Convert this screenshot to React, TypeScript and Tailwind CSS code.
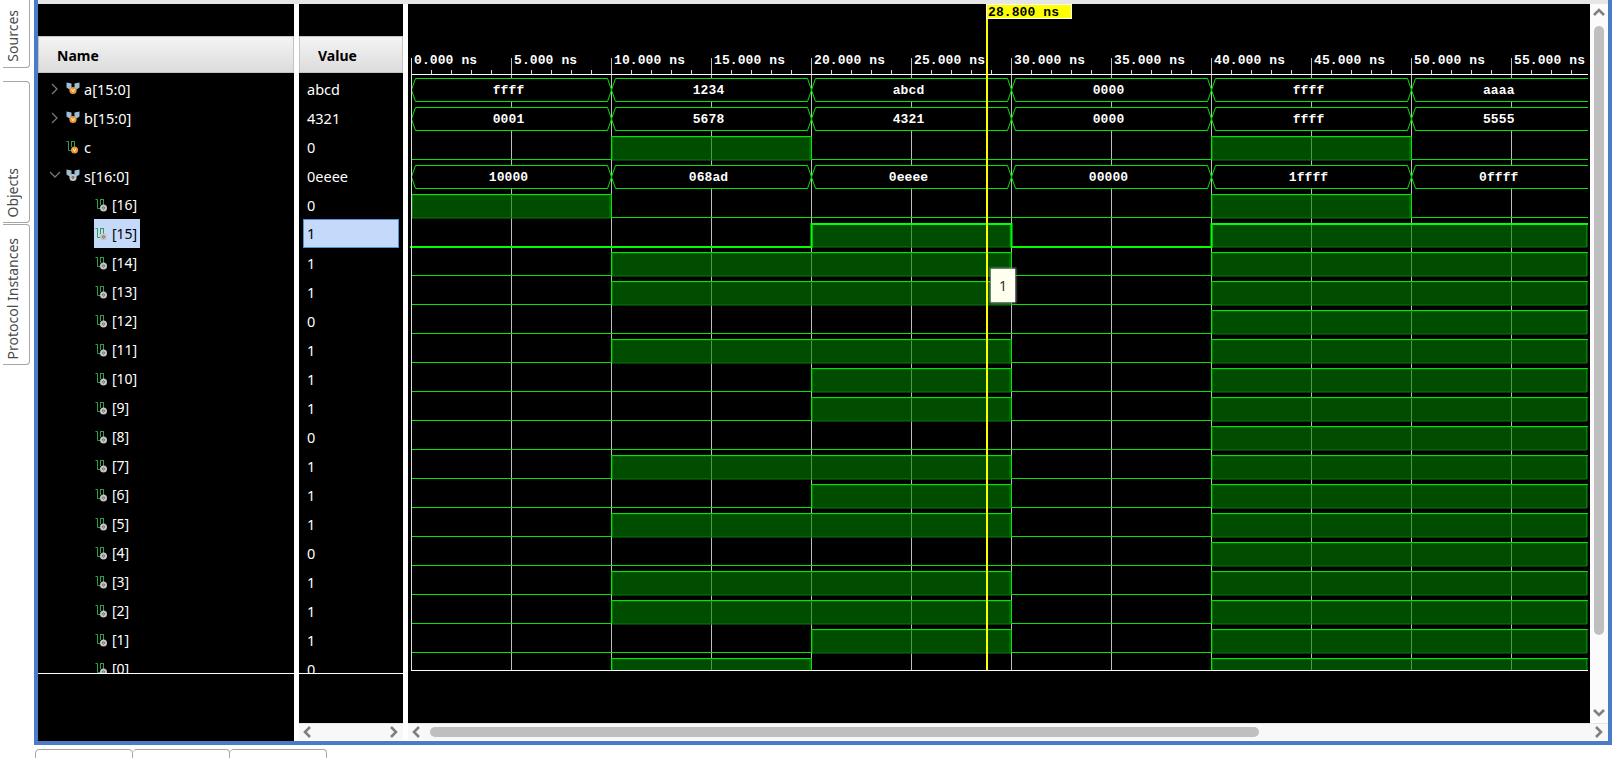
import React from "react";

const UI = { fontFamily: '"Noto Sans", "Open Sans", sans-serif' };
const MONO = '"Liberation Mono", monospace';

const sVals = [0x10000, 0x068ad, 0x0eeee, 0x00000, 0x1ffff, 0x0ffff];
const cVals = [0, 1, 0, 0, 1, 0];
const xs = [411.5, 611.5, 811.5, 1011.5, 1211.5, 1411.5, 1588];
const busA = ["ffff", "1234", "abcd", "0000", "ffff", "aaaa"];
const busB = ["0001", "5678", "4321", "0000", "ffff", "5555"];
const busS = ["10000", "068ad", "0eeee", "00000", "1ffff", "0ffff"];
const labels = ["0.000", "5.000", "10.000", "15.000", "20.000", "25.000", "30.000", "35.000", "40.000", "45.000", "50.000", "55.000"];

function BusIcon({ color }: { color: string }) {
  return (
    <svg width="14" height="14" viewBox="0 0 14 14" className="shrink-0">
      <path d="M0.5 0.5 L5.5 1.5 V6 L3.5 7.5 L0.5 5.5 Z" fill="#9dbfd6" />
      <path d="M13.5 0.5 L8.5 1.5 V6 L10.5 7.5 L13.5 5.5 Z" fill="#9dbfd6" />
      <circle cx="7" cy="8.5" r="3.6" fill={color} />
      <path d={color === "#ef9430" ? "M5.5 7 L7 10 L8.5 7" : "M7 7.5 a1 1 0 1 0 .01 0"} fill="none" stroke={color === "#ef9430" ? "#fff3d8" : "#666"} strokeWidth="1" />
    </svg>
  );
}

function BitIcon({ color }: { color: string }) {
  return (
    <svg width="13" height="14" viewBox="0 0 13 14" className="shrink-0">
      <path d="M0.5 1.5 H2.5 V10.5 H5" fill="none" stroke="#2fa04a" strokeWidth="1" />
      <path d="M5.5 1 V7 M8.5 1 V7 M5.5 1.5 H8.5" fill="none" stroke="#2fa04a" strokeWidth="1" />
      <circle cx="8.5" cy="10" r="3.5" fill={color} />
      <path d={color === "#ef9430" ? "M7 8.5 L8.5 11.5 L10 8.5" : "M8.5 9 a1 1 0 1 0 .01 0"} fill="none" stroke={color === "#ef9430" ? "#fff3d8" : "#666"} strokeWidth="1" />
    </svg>
  );
}

function Chevron({ dir, cls, thick }: { dir: "l" | "r" | "u" | "d"; cls?: string; thick?: boolean }) {
  const d = { l: "M8 2 L3 7 L8 12", r: "M3 2 L8 7 L3 12", u: "M1 8 L6 3 L11 8", d: "M1 3 L6 8 L11 3" }[dir];
  return (
    <svg width="12" height="14" viewBox="0 0 12 14" className={cls}>
      <path d={d} fill="none" stroke={thick ? "#808080" : "#777"} strokeWidth={thick ? 2.6 : 1.3} />
    </svg>
  );
}

type Row = { label: string; value: string; kind: "bus" | "bit"; color: string; child?: boolean; chev?: "r" | "d"; selected?: boolean };

const rows: Row[] = [
  { label: "a[15:0]", value: "abcd", kind: "bus", color: "#ef9430", chev: "r" },
  { label: "b[15:0]", value: "4321", kind: "bus", color: "#ef9430", chev: "r" },
  { label: "c", value: "0", kind: "bit", color: "#ef9430" },
  { label: "s[16:0]", value: "0eeee", kind: "bus", color: "#c4c4c4", chev: "d" },
  ...Array.from({ length: 17 }, (_, k): Row => {
    const i = 16 - k;
    return { label: `[${i}]`, value: String((0x0eeee >> i) & 1), kind: "bit", color: "#c4c4c4", child: true, selected: i === 15 };
  }),
];

function Bus({ top, vals }: { top: number; vals: string[] }) {
  const b = top + 23.5;
  const t = top + 0.5;
  const m = top + 12;
  return (
    <g>
      {vals.map((v, i) => {
        const x0 = xs[i];
        const x1 = xs[i + 1];
        const last = i === vals.length - 1;
        const d = last
          ? `M${x1} ${t} H${x0 + 4} L${x0 + 1} ${m - 3} L${x0} ${m} L${x0 + 1} ${m + 3} L${x0 + 4} ${b} H${x1}`
          : `M${x0 + 4} ${t} H${x1 - 4} L${x1 - 1} ${m - 3} L${x1} ${m} L${x1 - 1} ${m + 3} L${x1 - 4} ${b} H${x0 + 4} L${x0 + 1} ${m + 3} L${x0} ${m} L${x0 + 1} ${m - 3} Z`;
        return (
          <g key={i}>
            <path d={d} fill="#000" stroke="#00e800" strokeWidth="1" />
            <text x={last ? (x0 + x1) / 2 - 1 : (x0 + x1) / 2 - 3} y={top + 16} fill="#fff" fontFamily={MONO} fontWeight="700" fontSize="13" letterSpacing="0.1" textAnchor="middle">
              {v}
            </text>
          </g>
        );
      })}
    </g>
  );
}

function Bit({ top, bits, sel }: { top: number; bits: number[]; sel?: boolean }) {
  const hi = top + (sel ? 1 : 0.5);
  const lo = top + (sel ? 24 : 23.5);
  const runs: [number, number][] = [];
  bits.forEach((v, i) => {
    if (!v) return;
    const last = runs[runs.length - 1];
    if (last && last[1] === xs[i]) last[1] = xs[i + 1];
    else runs.push([xs[i], xs[i + 1]]);
  });
  let d = `M${sel ? 410 : 411.5} ${bits[0] ? hi : lo}`;
  bits.forEach((v, i) => {
    const y = v ? hi : lo;
    d += ` V${y} H${xs[i + 1]}`;
  });
  return (
    <g>
      {runs.map(([a, b], i) => (
        <g key={i}>
          <rect x={a} y={top} width={b - a} height={24} fill="#008000" fillOpacity="0.6" />
          <rect x={a + 1} y={top + 1} width={b - a - 2.5} height={23} fill="none" stroke="#0a7a0a" strokeWidth="1" />
        </g>
      ))}
      <path d={d} fill="none" stroke={sel ? "#00ff00" : "#00e800"} strokeWidth={sel ? 2 : 1} />
    </g>
  );
}

function Waves() {
  const grid = Array.from({ length: 12 }, (_, i) => 411.5 + i * 100);
  const minor = Array.from({ length: 59 }, (_, i) => 411.5 + i * 20).filter((_, i) => i % 5 !== 0);
  return (
    <svg width="1182" height="719" viewBox="408 4 1182 719" className="block">
      <defs>
        <clipPath id="wave-clip">
          <rect x="408" y="74" width="1180" height="596" />
        </clipPath>
      </defs>
      {labels.map((l, i) => (
        <text key={l} x={grid[i] + 2.5} y={64} fill="#fff" fontFamily={MONO} fontWeight="700" fontSize="13" letterSpacing="0.1">
          {l + " ns"}
        </text>
      ))}
      {grid.map((x) => (
        <line key={x} x1={x} x2={x} y1={58} y2={670} stroke="#bdbdbd" />
      ))}
      {minor.map((x) => (
        <line key={x} x1={x} x2={x} y1={70} y2={74} stroke="#e0e0e0" />
      ))}
      <line x1={411} x2={1588} y1={74.5} y2={74.5} stroke="#fff" />
      <g clipPath="url(#wave-clip)">
        <Bus top={78} vals={busA} />
        <Bus top={107} vals={busB} />
        <Bit top={136} bits={cVals} />
        <Bus top={165} vals={busS} />
        {Array.from({ length: 17 }, (_, k) => {
          const i = 16 - k;
          return <Bit key={i} top={194 + 29 * k} bits={sVals.map((v) => (v >> i) & 1)} sel={i === 15} />;
        })}
      </g>
      <line x1={411} x2={1588} y1={670.5} y2={670.5} stroke="#fff" />
      <line x1={411.5} x2={411.5} y1={58} y2={670} stroke="#ddd" />
      <line x1={987} x2={987} y1={4} y2={670} stroke="#ffff00" strokeWidth="2" />
      <rect x={986.5} y={4.5} width={85} height={14} fill="#ffff00" stroke="#fff" />
      <text x={988} y={16} fill="#000" fontFamily={MONO} fontWeight="700" fontSize="13" letterSpacing="0.1">
        28.800 ns
      </text>
    </svg>
  );
}

function Tab({ label, cls }: { label: string; cls: string }) {
  return (
    <div className={`w-[27px] shrink-0 flex flex-col justify-end border-r border-[#a6a6a6] ${cls}`}>
      <span className="[writing-mode:vertical-rl] rotate-180 text-[14px] leading-[20px] text-[#4a4a4a] pl-[3px]" style={UI}>
        {label}
      </span>
    </div>
  );
}

export default function App() {
  return (
    <div className="w-[1624px] h-[758px] bg-white overflow-hidden flex flex-col" style={UI}>
      <div className="flex h-[745px] shrink-0">
        <div className="w-[34px] shrink-0 flex flex-col pl-[3px]">
          <Tab label="Sources" cls="h-[68px] border-b rounded-br-[4px] pb-[5px]" />
          <div className="h-[13px] shrink-0" />
          <Tab label="Objects" cls="h-[142px] border-y rounded-r-[4px] pb-[4px]" />
          <div className="h-[1px] shrink-0" />
          <Tab label="Protocol Instances" cls="h-[141px] border-y rounded-r-[4px] pb-[5px]" />
        </div>
        <div className="w-[1578px] shrink-0 border-x-4 border-b-4 border-[#4a7cc9] flex flex-col">
          <div className="h-[4px] shrink-0 bg-[#e6e6e6]" />
          <div className="flex h-[737px]">
            <div className="w-[256px] shrink-0 bg-black flex flex-col">
              <div className="h-[32px] shrink-0" />
              <div className="h-[37px] shrink-0 bg-gradient-to-b from-[#f4f4f4] to-[#dcdcdc] border border-[#c4c4c4] flex items-center pl-[18px] pt-[2px] text-[14px] font-bold text-black">Name</div>
              <div className="h-[600px] shrink-0 overflow-hidden pt-[1px]">
                {rows.map((r) => (
                  <div key={r.label} className={`h-[29px] flex items-center ${r.child ? "pl-[56px]" : ""}`}>
                    {!r.child && (
                      <div className="w-[27px] pl-[11px] shrink-0">
                        {r.chev && <Chevron dir={r.chev} />}
                      </div>
                    )}
                    <div className={`h-[29px] flex items-center pl-[1px] pr-[3px] ${r.selected ? "bg-[#c5dafb] text-black" : "text-white"}`}>
                      {r.kind === "bus" ? <BusIcon color={r.color} /> : <BitIcon color={r.color} />}
                      <span className={`leading-[20px] ${r.child ? "text-[14px] ml-[4px]" : r.kind === "bus" ? "text-[14.5px] ml-[4px]" : "text-[14.5px] ml-[5px]"}`}>{r.label}</span>
                    </div>
                  </div>
                ))}
              </div>
              <div className="h-[1px] shrink-0 bg-white" />
            </div>
            <div className="w-[5px] shrink-0 bg-white" />
            <div className="w-[104px] shrink-0 bg-black flex flex-col">
              <div className="h-[32px] shrink-0" />
              <div className="h-[37px] shrink-0 bg-gradient-to-b from-[#f4f4f4] to-[#dcdcdc] border border-[#c4c4c4] flex items-center pl-[18px] pt-[2px] text-[14px] font-bold text-black">Value</div>
              <div className="h-[600px] shrink-0 overflow-hidden pt-[1px]">
                {rows.map((r) => (
                  <div key={r.label} className="h-[29px] flex items-center">
                    {r.selected ? (
                      <div className="ml-[4px] w-[96px] h-[29px] bg-[#c5dafb] border border-[#4f94d4] text-black text-[14.5px] pl-[3px] pt-[1px] flex items-center">{r.value}</div>
                    ) : (
                      <span className="ml-[8px] mt-[2px] text-[14.5px] text-white">{r.value}</span>
                    )}
                  </div>
                ))}
              </div>
              <div className="h-[1px] shrink-0 bg-white" />
              <div className="h-[49px] shrink-0" />
              <div className="h-[17px] shrink-0 bg-[#f8f8f8] border-t border-[#e6e6e6] flex items-center justify-between px-[3px]">
                <Chevron dir="l" thick />
                <Chevron dir="r" thick />
              </div>
              <div className="h-[1px] shrink-0 bg-white" />
            </div>
            <div className="w-[5px] shrink-0 bg-white" />
            <div className="w-[1200px] shrink-0 flex flex-col">
              <div className="flex h-[719px] shrink-0">
                <div className="relative w-[1182px] h-[719px] bg-black shrink-0">
                  <Waves />
                  <div className="absolute left-[583px] top-[265px] w-[24px] h-[33px] bg-[#fffff0] shadow-[0_0_2px_1px_#9a9a9a] flex items-center justify-center text-[14px] text-[#333]">1</div>
                </div>
                <div className="w-[18px] shrink-0 bg-[#fbfbfb] flex flex-col items-center">
                  <Chevron dir="u" thick cls="mt-[3px] shrink-0" />
                  <div className="mt-[5px] w-[10px] h-[609px] rounded-[5px] bg-[#bfbfbf] shrink-0" />
                  <div className="flex-1" />
                  <Chevron dir="d" thick cls="mb-[2px] shrink-0" />
                </div>
              </div>
              <div className="h-[17px] shrink-0 bg-[#f8f8f8] border-t border-[#e6e6e6] flex items-center pl-[3px] pr-[3px]">
                <Chevron dir="l" thick cls="shrink-0" />
                <div className="ml-[7px] w-[829px] h-[10px] rounded-[5px] bg-[#bfbfbf] shrink-0" />
                <div className="flex-1" />
                <Chevron dir="r" thick cls="shrink-0" />
              </div>
              <div className="h-[1px] shrink-0 bg-white" />
            </div>
          </div>
        </div>
      </div>
      <div className="flex pl-[35px] pt-[4px]">
        <div className="w-[98px] h-[20px] border border-[#a6a6a6] rounded-t-[4px]" />
        <div className="w-[97px] h-[20px] border border-l-0 border-[#a6a6a6] rounded-t-[4px]" />
        <div className="w-[97px] h-[20px] border border-l-0 border-[#a6a6a6] rounded-t-[4px]" />
      </div>
    </div>
  );
}
